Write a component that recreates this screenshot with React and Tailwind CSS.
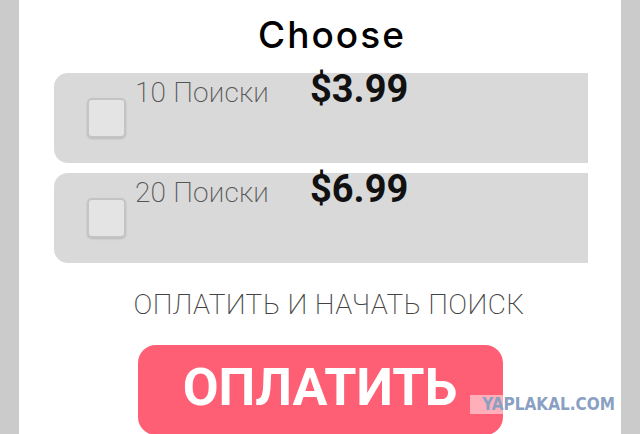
import React from "react";

function Checkbox() {
  return (
    <div className="mt-[25px] h-[40px] w-[39px] shrink-0 rounded-[5px] border-2 border-[#c4c4c4] bg-[#e4e4e4] shadow-[0_1px_2px_rgba(0,0,0,0.15)]" />
  );
}

function PlanCard({ label, price }) {
  return (
    <div className="flex h-[90px] w-[534px] items-start rounded-l-[14px] bg-[#d9d9d9] pl-[33px]">
      <Checkbox />
      <div className="ml-[9px] mt-[-3px] flex items-baseline font-[family-name:Roboto,sans-serif] leading-none">
        <span className="text-[28px] font-extralight tracking-[0.2px] text-[#555]">{label}</span>
        <span className="ml-[41px] text-[38px] font-bold text-[#111]">{price}</span>
      </div>
    </div>
  );
}

export default function App() {
  return (
    <div className="relative flex h-[434px] w-[640px] overflow-hidden bg-[#cbcbcb]">
      <div className="ml-[19px] flex h-full w-[602px] flex-col bg-white">
        <div className="pl-[24px] pt-[16px] text-center">
          <h1 className="font-[family-name:Inter,sans-serif] text-[37px] font-medium leading-none tracking-[2px] text-black">
            Choose
          </h1>
        </div>

        <div className="ml-[35px] mt-[20px] flex flex-col gap-[10px]">
          <PlanCard label="10 Поиски" price="$3.99" />
          <PlanCard label="20 Поиски" price="$6.99" />
        </div>

        <div className="mt-[28px] pl-[18px] text-center">
          <p className="font-[family-name:Roboto,sans-serif] text-[28px] font-extralight leading-none tracking-[0.4px] text-[#444]">
            ОПЛАТИТЬ И НАЧАТЬ ПОИСК
          </p>
        </div>

        <div className="mt-[26px] flex justify-center">
          <button className="flex h-[90px] w-[365px] items-start justify-center rounded-[18px] bg-[#ff5f74] pt-[17px] font-[family-name:Roboto,sans-serif] text-[52px] font-bold leading-none text-white">
            ОПЛАТИТЬ
          </button>
        </div>
      </div>

      {/* site watermark stamped over the corner */}
      <div className="absolute left-[470px] top-[395px] flex h-[19px] w-[145px] items-center justify-end bg-white/50">
        <span className="font-[family-name:'DejaVu_Sans',sans-serif] font-stretch-condensed text-[17px] font-black leading-none tracking-[0px] text-[#8aa0c2]">
          YAPLAKAL.COM
        </span>
      </div>
    </div>
  );
}
